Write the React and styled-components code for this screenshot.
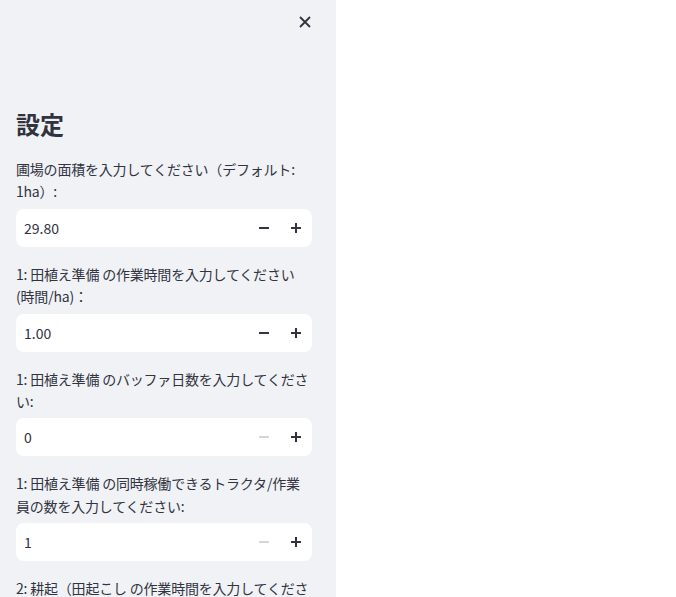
import React from "react";
import styled, { createGlobalStyle } from "styled-components";

const Global = createGlobalStyle`
  html, body { margin: 0; padding: 0; background: #ffffff; height: 100%; overflow: hidden; }
  #root { height: 100%; }
  * { box-sizing: border-box; }
`;

const Page = styled.div`
  display: flex;
  height: 597px;
  font-family: "Noto Sans CJK JP", "Source Sans Pro", sans-serif;
  color: rgb(49, 51, 63);
`;

const Sidebar = styled.aside`
  width: 336px;
  flex: none;
  height: 100%;
  background: #f0f2f6;
  overflow: hidden;
  display: flex;
  flex-direction: column;
`;

const SideHeader = styled.div`
  flex: none;
  display: flex;
  justify-content: flex-end;
  padding: 12px 21px 0 0;
  height: 106px;
`;

const CloseBtn = styled.button`
  width: 20px;
  height: 20px;
  border: none;
  background: transparent;
  padding: 0;
  display: flex;
  align-items: center;
  justify-content: center;
  color: rgb(49, 51, 63);
`;

const Content = styled.div`
  flex: none;
  padding: 0 24px 0 16px;
  display: flex;
  flex-direction: column;
  gap: 16px;
`;

const Heading = styled.h2`
  margin: 0;
  font-size: 24px;
  font-weight: 700;
  line-height: 36px;
`;

const Field = styled.div`
  display: flex;
  flex-direction: column;
`;

const Label = styled.label`
  font-size: 14px;
  line-height: 22.4px;
  letter-spacing: -0.2px;
  margin-bottom: 6px;
`;

const InputBox = styled.div`
  display: flex;
  align-items: center;
  height: 38px;
  background: #ffffff;
  border-radius: 8px;
`;

const Value = styled.div`
  flex: 1;
  padding-left: 8px;
  font-size: 14px;
`;

const Step = styled.button`
  width: 32px;
  height: 38px;
  border: none;
  background: transparent;
  padding: 0;
  display: flex;
  align-items: center;
  justify-content: center;
  color: ${(p) => (p.$disabled ? "#d3d5da" : "rgb(49, 51, 63)")};
`;

const Minus = () => (
  <svg width="10" height="10" viewBox="0 0 10 10">
    <path d="M0 5h10" stroke="currentColor" strokeWidth="2" />
  </svg>
);
const Plus = () => (
  <svg width="10" height="10" viewBox="0 0 10 10">
    <path d="M0 5h10M5 0v10" stroke="currentColor" strokeWidth="2" />
  </svg>
);

const fields = [
  { label: "圃場の面積を入力してください（デフォルト: 1ha）:", value: "29.80", minDisabled: false },
  { label: "1: 田植え準備 の作業時間を入力してください (時間/ha)：", value: "1.00", minDisabled: false },
  { label: "1: 田植え準備 のバッファ日数を入力してください:", value: "0", minDisabled: true },
  { label: "1: 田植え準備 の同時稼働できるトラクタ/作業員の数を入力してください:", value: "1", minDisabled: true },
  { label: "2: 耕起（田起こし の作業時間を入力してください (時間/ha)：", value: "1.00", minDisabled: false },
];

export default function App() {
  return (
    <>
      <Global />
      <Page>
        <Sidebar>
          <SideHeader>
            <CloseBtn aria-label="close">
              <svg width="14" height="14" viewBox="0 0 14 14">
                <path d="M2 2l10 10M12 2L2 12" stroke="currentColor" strokeWidth="1.8" />
              </svg>
            </CloseBtn>
          </SideHeader>
          <Content>
            <Heading>設定</Heading>
            {fields.map((f, i) => (
              <Field key={i}>
                <Label>{f.label}</Label>
                <InputBox>
                  <Value>{f.value}</Value>
                  <Step $disabled={f.minDisabled}><Minus /></Step>
                  <Step><Plus /></Step>
                </InputBox>
              </Field>
            ))}
          </Content>
        </Sidebar>
      </Page>
    </>
  );
}
